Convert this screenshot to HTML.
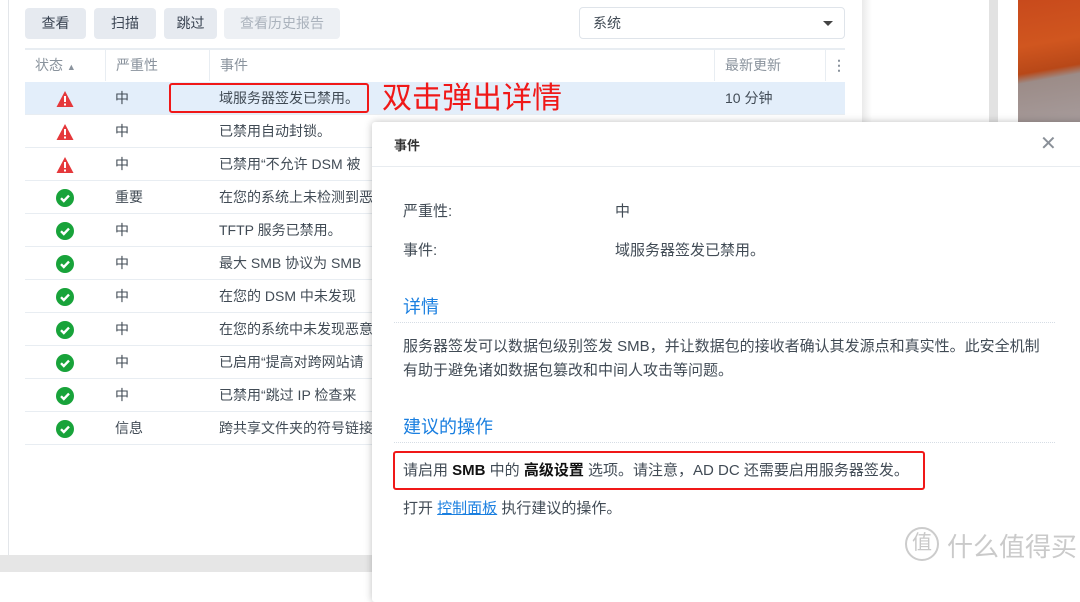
<!DOCTYPE html>
<html><head><meta charset="utf-8"><style>
*{margin:0;padding:0;box-sizing:border-box}
body{width:1080px;height:572px;overflow:hidden;position:relative;background:#fff;font-family:"Liberation Sans","Noto Sans CJK SC",sans-serif;font-size:14px;color:#414b55}
.a{position:absolute;white-space:nowrap}
.btn{position:absolute;top:8px;height:31px;background:#e6eaf0;border-radius:4px;line-height:31px;text-align:center;font-size:14px;color:#3a4452}
.row{position:absolute;left:25px;width:820px;height:33px;border-bottom:1px solid #e8edf2;line-height:32px}
.row span{position:absolute;white-space:nowrap}
.ic{position:absolute;left:31px;top:8px;width:18px;height:18px}
.hd{position:absolute;top:49px;height:32px;line-height:32px;color:#8a939d;border-right:1px solid #e8edf2;padding-left:10px}
.dl{position:absolute;left:394px;width:661px;border-top:1px dotted #d6dde5}
.dg{font-size:15px}
</style></head><body>
<div class="a" style="left:0;top:0;width:9px;height:572px;background:#fff;border-right:1px solid #e3e6ea"></div>
<div class="a" style="left:0;top:555px;width:380px;height:17px;background:#e6e6e6"></div>
<div class="a" style="left:862px;top:0;width:10px;height:125px;background:linear-gradient(90deg,#eaeaea,#fff)"></div>
<div class="a" style="left:989px;top:0;width:9px;height:125px;background:#e2e2e2"></div>
<div class="a" style="left:1018px;top:0;width:62px;height:125px;background:linear-gradient(170deg,#c84a1c 0%,#d0561f 35%,#b84818 55%,#9c8c88 62%,#a79c9c 100%)"></div>

<div class="btn" style="left:25px;width:61px">查看</div>
<div class="btn" style="left:94px;width:62px">扫描</div>
<div class="btn" style="left:164px;width:53px">跳过</div>
<div class="btn" style="left:224px;width:116px;color:#aab2bc;background:#edf0f4">查看历史报告</div>
<div class="a" style="left:579px;top:7px;width:266px;height:32px;border:1px solid #dfe4ea;border-radius:4px;line-height:30px;padding-left:13px;color:#414b55">系统<div class="a" style="right:11px;top:13px;border-left:5px solid transparent;border-right:5px solid transparent;border-top:5px solid #444"></div></div>

<div class="a" style="left:25px;top:48px;width:820px;border-top:2px solid #e8edf2"></div>
<div class="hd" style="left:25px;width:81px">状态 <span style="font-size:9px">▲</span></div>
<div class="hd" style="left:106px;width:104px">严重性</div>
<div class="hd" style="left:210px;width:505px">事件</div>
<div class="hd" style="left:715px;width:111px">最新更新</div>
<div class="hd" style="left:826px;width:19px;border:none;padding-left:6px;font-weight:bold">⋮</div>

<div class="row" style="top:82px;background:#e3eefa"><svg class="ic" viewBox="0 0 18 18"><path d="M9 1L17.5 17H.5z" fill="#e5383b"/><rect x="8" y="6" width="2" height="6" fill="#fff"/><rect x="8" y="13.5" width="2" height="2" fill="#fff"/></svg><span style="left:90px">中</span><span style="left:194px">域服务器签发已禁用。</span><span style="left:700px">10 分钟</span></div>
<div class="row" style="top:115px"><svg class="ic" viewBox="0 0 18 18"><path d="M9 1L17.5 17H.5z" fill="#e5383b"/><rect x="8" y="6" width="2" height="6" fill="#fff"/><rect x="8" y="13.5" width="2" height="2" fill="#fff"/></svg><span style="left:90px">中</span><span style="left:194px">已禁用自动封锁。</span></div>
<div class="row" style="top:148px"><svg class="ic" viewBox="0 0 18 18"><path d="M9 1L17.5 17H.5z" fill="#e5383b"/><rect x="8" y="6" width="2" height="6" fill="#fff"/><rect x="8" y="13.5" width="2" height="2" fill="#fff"/></svg><span style="left:90px">中</span><span style="left:194px">已禁用“不允许 DSM 被</span></div>
<div class="row" style="top:181px"><svg class="ic" viewBox="0 0 18 18"><circle cx="9" cy="9" r="9" fill="#18a33a"/><path d="M5 9.2l2.8 2.8 5.2-5.4" stroke="#fff" stroke-width="2.4" fill="none"/></svg><span style="left:90px">重要</span><span style="left:194px">在您的系统上未检测到恶</span></div>
<div class="row" style="top:214px"><svg class="ic" viewBox="0 0 18 18"><circle cx="9" cy="9" r="9" fill="#18a33a"/><path d="M5 9.2l2.8 2.8 5.2-5.4" stroke="#fff" stroke-width="2.4" fill="none"/></svg><span style="left:90px">中</span><span style="left:194px">TFTP 服务已禁用。</span></div>
<div class="row" style="top:247px"><svg class="ic" viewBox="0 0 18 18"><circle cx="9" cy="9" r="9" fill="#18a33a"/><path d="M5 9.2l2.8 2.8 5.2-5.4" stroke="#fff" stroke-width="2.4" fill="none"/></svg><span style="left:90px">中</span><span style="left:194px">最大 SMB 协议为 SMB</span></div>
<div class="row" style="top:280px"><svg class="ic" viewBox="0 0 18 18"><circle cx="9" cy="9" r="9" fill="#18a33a"/><path d="M5 9.2l2.8 2.8 5.2-5.4" stroke="#fff" stroke-width="2.4" fill="none"/></svg><span style="left:90px">中</span><span style="left:194px">在您的 DSM 中未发现</span></div>
<div class="row" style="top:313px"><svg class="ic" viewBox="0 0 18 18"><circle cx="9" cy="9" r="9" fill="#18a33a"/><path d="M5 9.2l2.8 2.8 5.2-5.4" stroke="#fff" stroke-width="2.4" fill="none"/></svg><span style="left:90px">中</span><span style="left:194px">在您的系统中未发现恶意</span></div>
<div class="row" style="top:346px"><svg class="ic" viewBox="0 0 18 18"><circle cx="9" cy="9" r="9" fill="#18a33a"/><path d="M5 9.2l2.8 2.8 5.2-5.4" stroke="#fff" stroke-width="2.4" fill="none"/></svg><span style="left:90px">中</span><span style="left:194px">已启用“提高对跨网站请</span></div>
<div class="row" style="top:379px"><svg class="ic" viewBox="0 0 18 18"><circle cx="9" cy="9" r="9" fill="#18a33a"/><path d="M5 9.2l2.8 2.8 5.2-5.4" stroke="#fff" stroke-width="2.4" fill="none"/></svg><span style="left:90px">中</span><span style="left:194px">已禁用“跳过 IP 检查来</span></div>
<div class="row" style="top:412px"><svg class="ic" viewBox="0 0 18 18"><circle cx="9" cy="9" r="9" fill="#18a33a"/><path d="M5 9.2l2.8 2.8 5.2-5.4" stroke="#fff" stroke-width="2.4" fill="none"/></svg><span style="left:90px">信息</span><span style="left:194px">跨共享文件夹的符号链接</span></div>

<div class="a" style="left:169px;top:83px;width:200px;height:30px;border:2px solid #f01818;border-radius:3px"></div>
<div class="a" style="left:382px;top:80px;font-size:30px;line-height:38px;color:#f01818">双击弹出详情</div>

<div class="a" style="left:372px;top:122px;width:720px;height:480px;background:#fff;border-radius:3px;box-shadow:0 0 8px rgba(0,0,0,.25)"></div>
<div class="a" style="left:394px;top:135px;font-size:13px;font-weight:bold;color:#333">事件</div>
<div class="a" style="left:1040px;top:131px;font-size:20px;color:#8a9098">✕</div>
<div class="a" style="left:372px;top:166px;width:708px;border-top:1px solid #e8ecf0"></div>
<div class="a dg" style="left:403px;top:200px">严重性:</div><div class="a dg" style="left:615px;top:200px">中</div>
<div class="a dg" style="left:403px;top:239px">事件:</div><div class="a dg" style="left:615px;top:239px">域服务器签发已禁用。</div>
<div class="a" style="left:403px;top:293px;font-size:18px;color:#1a7fe0">详情</div>
<div class="dl" style="top:322px"></div>
<div class="a dg" style="left:403px;top:335px;line-height:24px">服务器签发可以数据包级别签发 SMB，并让数据包的接收者确认其发源点和真实性。此安全机制<br>有助于避免诸如数据包篡改和中间人攻击等问题。</div>
<div class="a" style="left:403px;top:413px;font-size:18px;color:#1a7fe0">建议的操作</div>
<div class="dl" style="top:442px"></div>
<div class="a" style="left:393px;top:451px;width:532px;height:39px;border:2px solid #f01818;border-radius:3px"></div>
<div class="a dg" style="left:403px;top:459px">请启用 <b style="color:#111">SMB</b> 中的 <b style="color:#111">高级设置</b> 选项。请注意，AD DC 还需要启用服务器签发。</div>
<div class="a dg" style="left:403px;top:497px">打开 <span style="color:#1a7fe0;text-decoration:underline">控制面板</span> 执行建议的操作。</div>
<div class="a" style="left:905px;top:527px;width:34px;height:34px;border:2px solid #ccc;border-radius:50%;color:#c8c8c8;font-size:20px;text-align:center;line-height:29px">值</div>
<div class="a" style="left:947px;top:527px;font-size:26px;color:#cacaca">什么值得买</div>
</body></html>
